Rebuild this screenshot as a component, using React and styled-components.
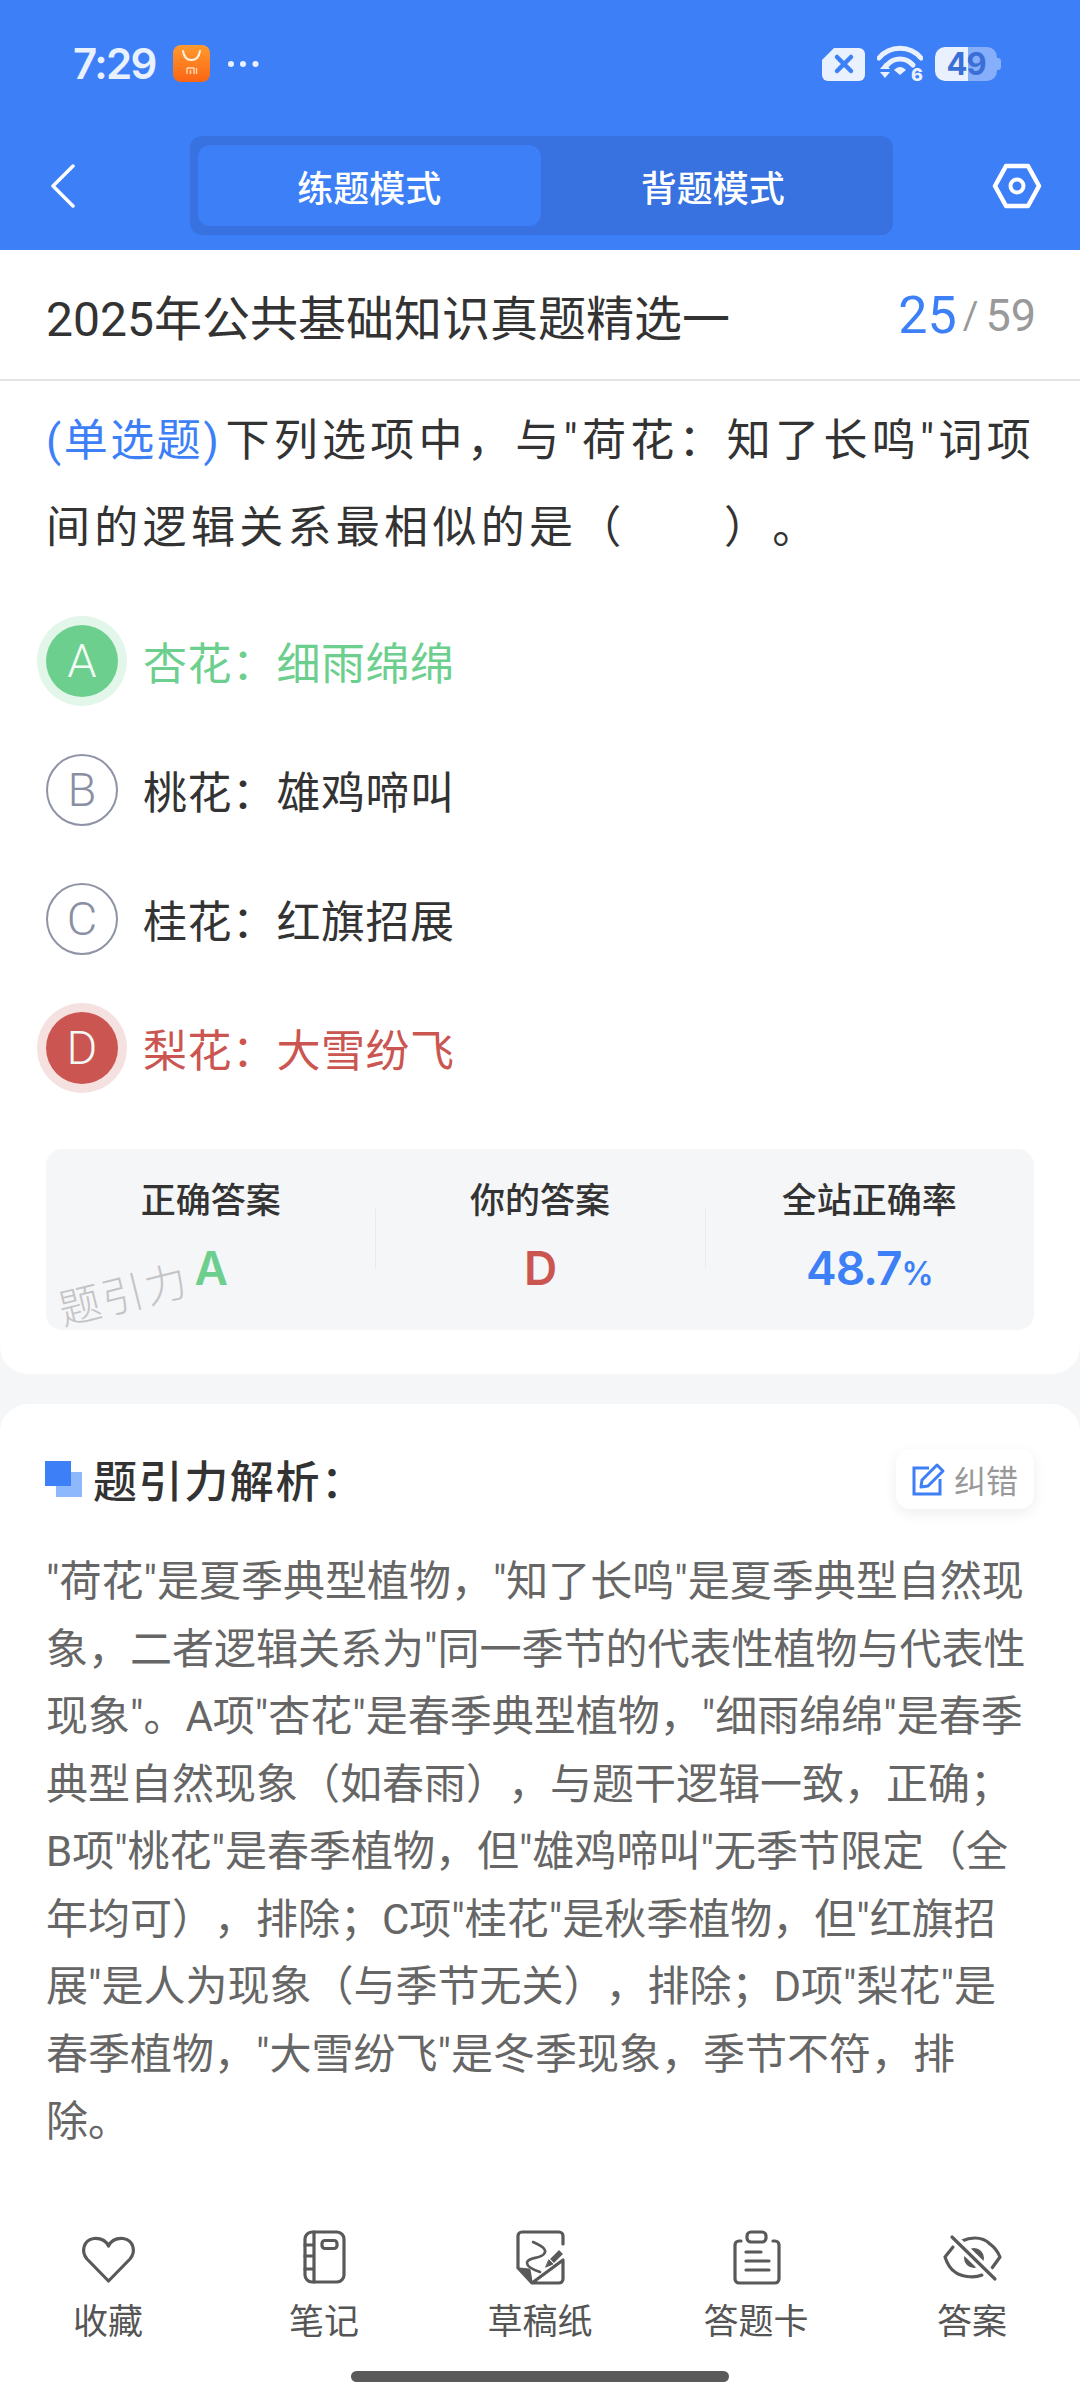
import React from 'react'
import styled, { createGlobalStyle } from 'styled-components'

const GlobalStyle = createGlobalStyle`
  html, body {
    margin: 0;
    padding: 0;
    background: #f5f6f8;
  }
  * {
    box-sizing: border-box;
  }
`

const Page = styled.div`
  width: 1080px;
  height: 2400px;
  overflow: hidden;
  display: flex;
  flex-direction: column;
  background: #f5f6f8;
  font-family: Roboto, "Noto Sans CJK SC", sans-serif;
  text-spacing-trim: space-all;
  color: #333;
`

const Header = styled.header`
  height: 250px;
  background: #3c7ff7;
  flex-shrink: 0;
`

const StatusBar = styled.div`
  height: 136px;
  padding: 45px 80px 0 73px;
  display: flex;
  justify-content: space-between;
  align-items: flex-start;
`

const StatusLeft = styled.div`
  display: flex;
  align-items: center;
  height: 37px;
  gap: 17px;
`

const StatusRight = styled.div`
  display: flex;
  align-items: center;
  height: 37px;
  gap: 12px;
`

const Time = styled.span`
  font-family: Inter, sans-serif;
  font-size: 42px;
  font-weight: 600;
  color: #e9f1ff;
  letter-spacing: -1.6px;
  line-height: 37px;
`

const Battery = styled.div`
  position: relative;
  width: 62px;
  height: 34px;
  border-radius: 10px;
  background: linear-gradient(to right, #eaf1fe 53%, #86aefa 53%);
  font-family: Inter, sans-serif;
  font-size: 31px;
  font-weight: 700;
  letter-spacing: -1px;
  line-height: 34px;
  text-align: center;
  color: #3a6fd6;
  margin-right: 3px;
  &::after {
    content: "";
    position: absolute;
    right: -4px;
    top: 11px;
    width: 4px;
    height: 12px;
    border-radius: 0 3px 3px 0;
    background: #86aefa;
  }
`

const NavRow = styled.div`
  height: 99px;
  padding-left: 48px;
  padding-right: 38px;
  display: flex;
  align-items: center;
  justify-content: space-between;
`

const Tabs = styled.div`
  width: 703px;
  height: 99px;
  margin-left: 14px;
  padding: 9px 8px;
  background: #3772e0;
  border-radius: 12px;
  display: flex;
`

const Tab = styled.div`
  flex: 1;
  display: flex;
  align-items: center;
  justify-content: center;
  border-radius: 12px;
  font-size: 36px;
  font-weight: 500;
  color: #fff;
  background: ${(p) => (p.$active ? '#3c7ff7' : 'transparent')};
`

const TitleBar = styled.div`
  height: 131px;
  flex-shrink: 0;
  background: #fff;
  border-bottom: 2px solid #e4e4e4;
  padding: 0 44px 0 46px;
  display: flex;
  align-items: center;
  justify-content: space-between;
`

const Title = styled.h1`
  margin: 0;
  font-size: 48px;
  font-weight: 400;
  color: #333;
`

const Counter = styled.div`
  display: flex;
  align-items: center;
  margin-top: 3px;
  color: #999;
  font-size: 45px;
  line-height: 60px;
`

const Current = styled.span`
  font-size: 52px;
  color: #3c7ff7;
`

const Slash = styled.span`
  margin: 0 7px 0 6px;
  font-size: 38px;
`

const QuestionCard = styled.section`
  background: #fff;
  padding: 17px 46px 45px;
  border-radius: 0 0 28px 28px;
  height: 993px;
  flex-shrink: 0;
`

const Question = styled.p`
  margin: 0 0 24px;
  font-size: 44px;
  line-height: 87px;
  letter-spacing: 4.3px;
  white-space: nowrap;
  color: #333;
`

const Kind = styled.span`
  color: #3c7ff7;
  letter-spacing: 2.6px;
  margin-right: 4px;
`

const Option = styled.div`
  height: 129px;
  display: flex;
  align-items: center;
  gap: 25px;
  font-size: 44px;
  letter-spacing: 0.5px;
  color: ${(p) => p.$color || '#333'};
`

const Letter = styled.span`
  width: 72px;
  height: 72px;
  flex-shrink: 0;
  border-radius: 50%;
  display: flex;
  align-items: center;
  justify-content: center;
  font-size: 47px;
  font-weight: 300;
  letter-spacing: 0;
  color: ${(p) => (p.$fill ? '#f2fbf5' : '#8a8fa3')};
  background: ${(p) => p.$fill || 'transparent'};
  border: ${(p) => (p.$fill ? 'none' : '2px solid #8f93a6')};
  box-shadow: ${(p) => (p.$halo ? `0 0 0 9px ${p.$halo}` : 'none')};
`

const StatPanel = styled.div`
  position: relative;
  margin-top: 37px;
  height: 181px;
  background: #f5f6f8;
  border-radius: 16px;
  display: grid;
  grid-template-columns: repeat(3, 1fr);
  padding-top: 33px;
`

const Stat = styled.div`
  position: relative;
  display: flex;
  flex-direction: column;
  align-items: center;
  gap: 21px;
  & + &::before {
    content: "";
    position: absolute;
    left: 0;
    top: 27px;
    height: 59px;
    width: 1px;
    background: #e9eaed;
  }
`

const StatLabel = styled.span`
  font-size: 35px;
  font-weight: 500;
  line-height: 40px;
  color: #333;
`

const StatValue = styled.span`
  font-family: Inter, sans-serif;
  font-size: 46px;
  font-weight: 600;
  letter-spacing: -1px;
  line-height: 50px;
  color: ${(p) => p.$color};
`

const Percent = styled.span`
  font-size: 32px;
`

const Watermark = styled.span`
  position: absolute;
  left: 12px;
  top: 125px;
  font-size: 42px;
  font-weight: 300;
  letter-spacing: 2px;
  line-height: 44px;
  color: #c4c4c6;
  transform: rotate(-14deg);
`

const AnalysisCard = styled.section`
  margin-top: 30px;
  flex: 1;
  background: #fff;
  border-radius: 28px 28px 0 0;
  display: flex;
  flex-direction: column;
`

const AnalysisHead = styled.div`
  padding: 44px 46px 0 45px;
  height: 105px;
  display: flex;
  align-items: center;
  justify-content: space-between;
`

const HeadLeft = styled.div`
  display: flex;
  align-items: center;
  gap: 11px;
`

const Squares = styled.span`
  position: relative;
  width: 37px;
  height: 36px;
  display: block;
  background: linear-gradient(#8db8fb, #8db8fb) 11px 11px / 26px 25px no-repeat;
  &::before {
    content: "";
    position: absolute;
    left: 0;
    top: 0;
    width: 26px;
    height: 25px;
    background: #3c7ff7;
  }
`

const AnalysisTitle = styled.h2`
  margin: 0;
  font-size: 44px;
  font-weight: 500;
  letter-spacing: 1.6px;
  color: #333;
`

const Report = styled.div`
  width: 138px;
  height: 60px;
  border-radius: 14px;
  background: #fff;
  box-shadow: 0 4px 14px rgba(0, 0, 0, 0.07);
  display: flex;
  align-items: center;
  justify-content: center;
  gap: 8px;
  font-size: 32px;
  color: #999;
`

const Analysis = styled.div`
  padding: 39px 46px 0;
  font-size: 42px;
  line-height: 67.5px;
  color: #666;
`

const Line = styled.div`
  white-space: nowrap;
`

const BottomBar = styled.nav`
  margin-top: auto;
  display: grid;
  grid-template-columns: repeat(5, 216px);
  padding-bottom: 26px;
`

const BarItem = styled.div`
  display: flex;
  flex-direction: column;
  align-items: center;
  gap: 15px;
  font-size: 35px;
  line-height: 44px;
  color: #555;
`

const HomeBar = styled.div`
  width: 378px;
  height: 11px;
  border-radius: 6px;
  background: #5a5a5a;
  margin: 0 auto 18px;
`

const Ink = styled.svg`
  display: block;
  fill: none;
  stroke: #595959;
  stroke-width: 3.2;
  stroke-linecap: round;
  stroke-linejoin: round;
`

const ShopIcon = () => (
  <svg width="37" height="37" viewBox="0 0 37 37">
    <defs>
      <linearGradient id="shop" x1="0" y1="0" x2="0" y2="1">
        <stop offset="0" stopColor="#ff9a2e" />
        <stop offset="1" stopColor="#fb6512" />
      </linearGradient>
    </defs>
    <rect width="37" height="37" rx="8" fill="url(#shop)" />
    <path d="M10 6c1 6 4 9 8.500 9s7.500-3 8.500-9" fill="none" stroke="#fff3df" strokeWidth="2" strokeLinecap="round" />
    <path d="M14 23h7v6M14 23v6M17.500 25v4M23.500 23v6" fill="none" stroke="#ffd9b8" strokeWidth="1.400" />
  </svg>
)

const Dots = () => (
  <svg width="32" height="8" viewBox="0 0 32 8">
    <circle cx="4" cy="4" r="3" fill="#e9f1ff" />
    <circle cx="16" cy="4" r="3" fill="#e9f1ff" />
    <circle cx="28.500" cy="4" r="3" fill="#e9f1ff" />
  </svg>
)

const SimIcon = () => (
  <svg width="43" height="34" viewBox="0 0 43 34">
    <path d="M12 1h25a6 6 0 0 1 6 6v21a6 6 0 0 1-6 6H6a6 6 0 0 1-6-6V13z" fill="#eaf1fe" />
    <path d="M15 10l14 14M29 10L15 24" stroke="#3c7ff7" strokeWidth="4.500" strokeLinecap="round" />
  </svg>
)

const WifiIcon = () => (
  <svg width="46" height="42" viewBox="0 0 46 42">
    <path d="M2 15C13 2 33 2 44 15" fill="none" stroke="#eaf1fe" strokeWidth="5" strokeLinecap="round" />
    <path d="M10 22c7-8 19-8 26 0" fill="none" stroke="#eaf1fe" strokeWidth="5" strokeLinecap="round" />
    <path d="M17 27c4-4 8-4 12 0l-6 5z" fill="#eaf1fe" />
    <path d="M3 26l5-6 5 6zM3 29l5 6 5-6z" fill="#eaf1fe" />
    <text x="34" y="38" fontFamily="Inter, sans-serif" fontSize="18" fontWeight="800" fill="#eaf1fe">6</text>
  </svg>
)

const BackIcon = () => (
  <svg width="28" height="44" viewBox="0 0 28 44">
    <path d="M25 2L5 22l20 20" fill="none" stroke="#fff" strokeWidth="3.500" strokeLinecap="round" strokeLinejoin="round" />
  </svg>
)

const HexIcon = () => (
  <svg width="50" height="46" viewBox="0 0 50 46">
    <path d="M3 23L14 3h22l11 20-11 20H14z" fill="none" stroke="#fff" strokeWidth="4.500" strokeLinejoin="round" />
    <circle cx="25" cy="23" r="6.500" fill="none" stroke="#fff" strokeWidth="4" />
  </svg>
)

const EditIcon = () => (
  <svg width="34" height="34" viewBox="0 0 34 34" fill="none" stroke="#3c7ff7" strokeWidth="3">
    <path d="M17 6H2v26h26V17" />
    <path d="M10 18L25 3l6 6-15 15-7 1z" strokeLinejoin="round" />
  </svg>
)

const HeartIcon = () => (
  <Ink width="60" height="56" viewBox="0 0 60 56">
    <path d="M30.500 51L9 29C3 22 5 10 16 8.500c7-.5 12 2.500 14.500 7.500C33 11 38 8 45 8.500 56 10 58 22 52 29z" />
  </Ink>
)

const NoteIcon = () => (
  <Ink width="60" height="56" viewBox="0 0 60 56">
    <rect x="11" y="2" width="39" height="50" rx="7" />
    <path d="M20 2v50M11 15h9M11 26h9M11 39h9" />
    <rect x="28" y="10.500" width="15" height="8" rx="3" />
  </Ink>
)

const DraftIcon = () => (
  <Ink width="60" height="56" viewBox="0 0 60 56">
    <path d="M8 38V6a4 4 0 0 1 4-4h37a4 4 0 0 1 4 4v8M53 30v19a4 4 0 0 1-4 4H22z" />
    <path d="M9 39l10 1 2 12z" fill="#595959" />
    <path d="M23 12c7 3 15 7 11 12-4 5-17 3-17 9 0 4 7 7 13 9" strokeWidth="2.600" />
    <path d="M51 22L42 31" strokeWidth="5.500" strokeLinecap="butt" />
    <path d="M39 30l4 4-7 3z" fill="#595959" strokeWidth="1" />
  </Ink>
)

const CardIcon = () => (
  <Ink width="60" height="56" viewBox="0 0 60 56">
    <path d="M15 11h-2a4 4 0 0 0-4 4v34a4 4 0 0 0 4 4h36a4 4 0 0 0 4-4V15a4 4 0 0 0-4-4h-2" />
    <rect x="21" y="2" width="19" height="10" rx="4" />
    <path d="M20 22h15M20 31h23M20 40h23" />
  </Ink>
)

const EyeOffIcon = () => (
  <Ink width="60" height="56" viewBox="0 0 60 56">
    <path d="M11 17L3 27c2 6 5 12 10 15 5 4 18 7 27 3" />
    <path d="M20 11c4-2 9-3 13-3 6 0 11 2 15 6 4 3 8 8 10 13l-8 11" />
    <circle cx="32" cy="28" r="10" fill="#595959" stroke="none" />
    <path d="M10 7l43 42" stroke="#fff" strokeWidth="10" />
    <path d="M10 7l43 42" />
  </Ink>
)

const options = [
  { key: 'A', text: '杏花：细雨绵绵', color: '#6ccf8e', fill: '#6ccf8e', halo: '#e3f6ea' },
  { key: 'B', text: '桃花：雄鸡啼叫' },
  { key: 'C', text: '桂花：红旗招展' },
  { key: 'D', text: '梨花：大雪纷飞', color: '#cb5550', fill: '#cb5550', halo: '#f5e1e0' },
]

const analysisLines = [
  '"荷花"是夏季典型植物，"知了长鸣"是夏季典型自然现',
  '象，二者逻辑关系为"同一季节的代表性植物与代表性',
  '现象"。A项"杏花"是春季典型植物，"细雨绵绵"是春季',
  '典型自然现象（如春雨），与题干逻辑一致，正确；',
  'B项"桃花"是春季植物，但"雄鸡啼叫"无季节限定（全',
  '年均可），排除；C项"桂花"是秋季植物，但"红旗招',
  '展"是人为现象（与季节无关），排除；D项"梨花"是',
  '春季植物，"大雪纷飞"是冬季现象，季节不符，排',
  '除。',
]

const barItems = [
  { label: '收藏', icon: <HeartIcon /> },
  { label: '笔记', icon: <NoteIcon /> },
  { label: '草稿纸', icon: <DraftIcon /> },
  { label: '答题卡', icon: <CardIcon /> },
  { label: '答案', icon: <EyeOffIcon /> },
]

const App = () => (
  <Page>
    <GlobalStyle />
    <Header>
      <StatusBar>
        <StatusLeft>
          <Time>7:29</Time>
          <ShopIcon />
          <Dots />
        </StatusLeft>
        <StatusRight>
          <SimIcon />
          <WifiIcon />
          <Battery>49</Battery>
        </StatusRight>
      </StatusBar>
      <NavRow>
        <BackIcon />
        <Tabs>
          <Tab $active>练题模式</Tab>
          <Tab>背题模式</Tab>
        </Tabs>
        <HexIcon />
      </NavRow>
    </Header>

    <TitleBar>
      <Title>2025年公共基础知识真题精选一</Title>
      <Counter>
        <Current>25</Current>
        <Slash>/</Slash>
        59
      </Counter>
    </TitleBar>

    <QuestionCard>
      <Question>
        <Kind>(单选题)</Kind>下列选项中，与"荷花：知了长鸣"词项
        <br />
        间的逻辑关系最相似的是（&emsp;&emsp;）。
      </Question>
      {options.map((o) => (
        <Option key={o.key} $color={o.color}>
          <Letter $fill={o.fill} $halo={o.halo}>{o.key}</Letter>
          {o.text}
        </Option>
      ))}
      <StatPanel>
        <Stat>
          <StatLabel>正确答案</StatLabel>
          <StatValue $color="#6ccf8e">A</StatValue>
        </Stat>
        <Stat>
          <StatLabel>你的答案</StatLabel>
          <StatValue $color="#cb5550">D</StatValue>
        </Stat>
        <Stat>
          <StatLabel>全站正确率</StatLabel>
          <StatValue $color="#3c7ff7">
            48.7<Percent>%</Percent>
          </StatValue>
        </Stat>
        <Watermark>题引力</Watermark>
      </StatPanel>
    </QuestionCard>

    <AnalysisCard>
      <AnalysisHead>
        <HeadLeft>
          <Squares />
          <AnalysisTitle>题引力解析：</AnalysisTitle>
        </HeadLeft>
        <Report>
          <EditIcon />
          纠错
        </Report>
      </AnalysisHead>
      <Analysis>
        {analysisLines.map((line) => (
          <Line key={line}>{line}</Line>
        ))}
      </Analysis>
      <BottomBar>
        {barItems.map((item) => (
          <BarItem key={item.label}>
            {item.icon}
            {item.label}
          </BarItem>
        ))}
      </BottomBar>
      <HomeBar />
    </AnalysisCard>
  </Page>
)

export default App
